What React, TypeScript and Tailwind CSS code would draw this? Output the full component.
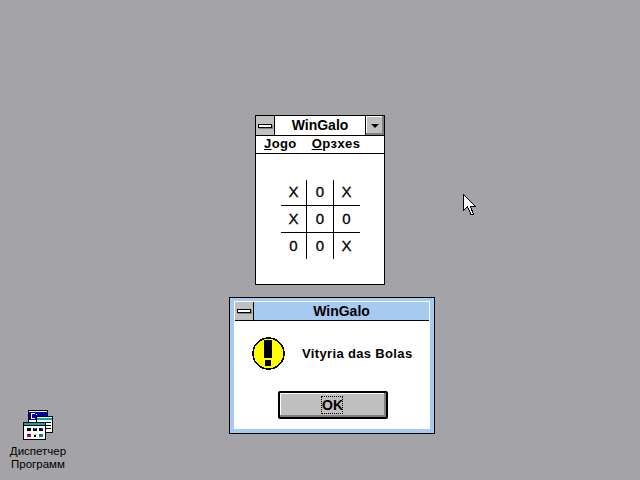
const FONT = "font-['Liberation_Sans',Arial,sans-serif]";

const BOARD = ["X", "0", "X", "X", "0", "0", "0", "0", "X"];

function ControlBox({ className }: { className: string }) {
    return (
        <div className={`flex shrink-0 items-center justify-center bg-[#c0c0c0] ${className}`}>
            <div className="h-[4px] w-[14px] border border-black bg-white shadow-[1px_1px_0_#808080]" />
        </div>
    );
}

function ProgmanIcon() {
    return (
        <svg width="30" height="30" viewBox="0 0 30 30" shapeRendering="crispEdges">
            <rect x="5" y="0" width="20" height="16" fill="#000" />
            <rect x="6" y="1" width="18" height="14" fill="#fff" />
            <rect x="6" y="2" width="18" height="8" fill="#0000a8" />
            <rect x="8" y="3" width="1" height="6" fill="#fff" />
            <rect x="9" y="3" width="3" height="1" fill="#fff" />
            <rect x="9" y="8" width="3" height="1" fill="#fff" />
            <rect x="13" y="4" width="1" height="1" fill="#fff" />
            <rect x="13" y="7" width="1" height="1" fill="#fff" />
            <rect x="13" y="6" width="17" height="17" fill="#000" />
            <rect x="14" y="7" width="15" height="15" fill="#fff" />
            <rect x="14" y="8" width="15" height="2" fill="#00a8a8" />
            <rect x="23" y="12" width="5" height="1" fill="#000" />
            <rect x="23" y="15" width="5" height="1" fill="#000" />
            <rect x="23" y="18" width="5" height="1" fill="#000" />
            <rect x="0" y="12" width="23" height="18" fill="#000" />
            <rect x="1" y="13" width="21" height="16" fill="#fff" />
            <rect x="1" y="13" width="21" height="3" fill="#00a8a8" />
            <rect x="1" y="15" width="21" height="1" fill="#000" />
            <rect x="4" y="18" width="4" height="3" fill="#000" />
            <rect x="10" y="18" width="4" height="3" fill="#000" />
            <rect x="11" y="18" width="2" height="1" fill="#00a8a8" />
            <rect x="16" y="18" width="4" height="3" fill="#000" />
            <rect x="18" y="18" width="2" height="1" fill="#a800a8" />
            <rect x="4" y="24" width="4" height="3" fill="#a800a8" />
            <rect x="5" y="24" width="2" height="1" fill="#000" />
            <rect x="10" y="24" width="4" height="1" fill="#e8e800" />
            <rect x="11" y="25" width="2" height="2" fill="#000" />
            <rect x="16" y="24" width="4" height="3" fill="#008080" />
        </svg>
    );
}

function WarningIcon() {
    return (
        <svg width="33" height="33" viewBox="0 0 33 33" shapeRendering="crispEdges">
            <circle cx="16.5" cy="16.5" r="15.5" fill="#ffff00" stroke="#000" strokeWidth="1.5" />
            <rect x="12" y="3" width="8" height="18" fill="#000" />
            <circle cx="16" cy="26" r="3.5" fill="#000" />
        </svg>
    );
}

export default function App() {
    return (
        <div className={`relative h-[480px] w-[640px] overflow-hidden bg-[#a4a3a8] ${FONT}`}>
            <div className="absolute left-[255px] top-[115px] flex h-[170px] w-[130px] flex-col border border-black bg-white">
                <div className="flex h-[20px] items-stretch border-b border-black">
                    <ControlBox className="w-[19px] border-r border-black" />
                    <div className="flex-1 text-center text-[14px] leading-[18px] font-bold text-black">
                        WinGalo
                    </div>
                    <div className="flex w-[19px] items-center justify-center border-l border-black bg-[#c0c0c0] shadow-[inset_-2px_-2px_0_#808080,inset_1px_1px_0_#fff]">
                        <div className="h-0 w-0 border-x-[4px] border-t-[4px] border-x-transparent border-t-black" />
                    </div>
                </div>
                <div className="flex h-[18px] gap-[15px] border-b border-black pl-[8px] text-[13px] leading-[16px] font-bold tracking-[0.4px] text-black">
                    <span>
                        <span className="underline">J</span>ogo
                    </span>
                    <span>
                        <span className="underline">O</span>pзxes
                    </span>
                </div>
                <div className="ml-[25px] mt-[26px] grid w-[79px] grid-cols-[26px_27px_26px] grid-rows-[26px_27px_26px] text-[15px] text-black [-webkit-text-stroke:0.3px_black]">
                    {BOARD.map((mark, i) => (
                        <div
                            key={i}
                            className={`flex items-center justify-center ${i % 3 !== 2 ? "border-r border-black" : "pr-[1px]"} ${i < 6 ? "border-b border-black" : ""}`}
                        >
                            {mark}
                        </div>
                    ))}
                </div>
            </div>

            <div className="absolute left-[229px] top-[297px] h-[137px] w-[206px] border border-black bg-[#a6caf0] px-[4px] pb-[4px] pt-[3px]">
                <div className="flex h-full flex-col bg-white p-px">
                    <div className="flex h-[19px] items-stretch border-b border-black bg-[#a6caf0]">
                        <ControlBox className="w-[19px] border-r border-black" />
                        <div className="flex-1 text-center text-[14px] leading-[18px] font-bold text-black">
                            WinGalo
                        </div>
                    </div>
                    <div className="mt-[16px] flex items-center pl-[17px]">
                        <WarningIcon />
                        <span className="ml-[17px] text-[13px] font-bold tracking-[0.35px] text-black">
                            Vityria das Bolas
                        </span>
                    </div>
                    <button className="ml-[43px] mt-[21px] flex h-[28px] w-[110px] items-center justify-center rounded-[2px] border-2 border-black bg-[#c0c0c0] shadow-[inset_-2px_-2px_0_#808080,inset_1px_1px_0_#fff]">
                        <span className="mr-[2px] w-[22px] border border-dotted border-black text-[14px] leading-[16px] font-bold text-black">
                            OK
                        </span>
                    </button>
                </div>
            </div>

            <div className="absolute left-0 top-[410px] flex w-[76px] flex-col items-center text-center text-[11.5px] leading-[13px] text-black">
                <ProgmanIcon />
                <div className="mt-[5px]">Диспетчер</div>
                <div>Программ</div>
            </div>

            <svg className="absolute left-[462px] top-[193px]" width="16" height="24" viewBox="0 0 16 24" shapeRendering="crispEdges">
                <path d="M1.5 1.5V17.5L5.5 13.5L9 21.5H11.5L8.5 13.5H13.5Z" fill="#fff" stroke="#000" />
            </svg>
        </div>
    );
}
